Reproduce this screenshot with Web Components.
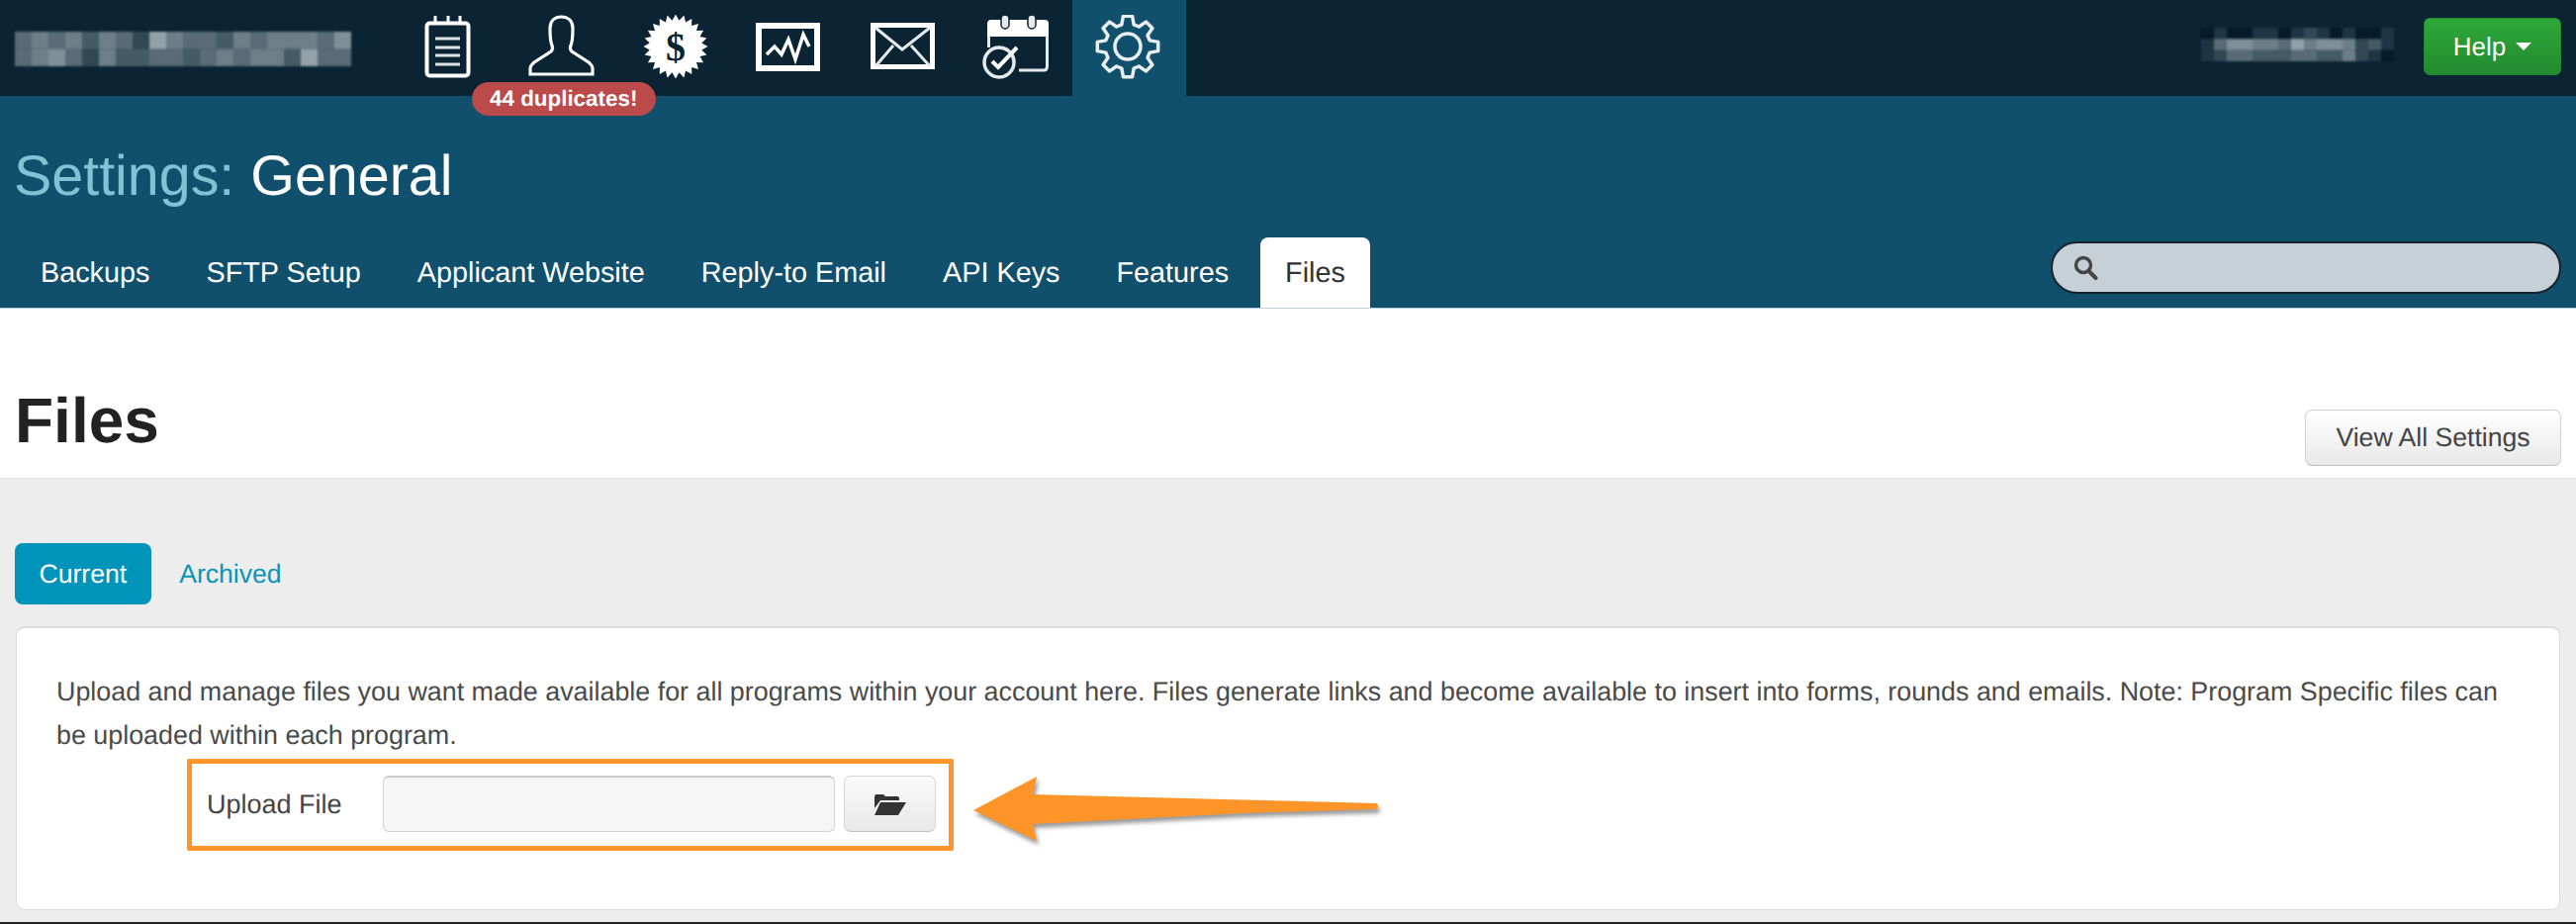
<!DOCTYPE html>
<html>
<head>
<meta charset="utf-8">
<title>Settings: General</title>
<style>
  html, body { margin: 0; padding: 0; }
  body {
    font-family: "Liberation Sans", Arial, sans-serif;
    background: #ededed;
    text-rendering: geometricPrecision;
  }
</style>
</head>
<body>
<app-topbar></app-topbar>
<settings-header></settings-header>
<page-title></page-title>
<files-panel></files-panel>

<script>
const WHITE = "#fff"
const DARK = "#0a2433"

function starPoints(cx, cy, outer, inner, count) {
  const pts = []
  for (let i = 0; i < count * 2; i++) {
    const r = i % 2 ? inner : outer
    const a = (Math.PI * i) / count - Math.PI / 2
    pts.push((cx + r * Math.cos(a)).toFixed(1) + "," + (cy + r * Math.sin(a)).toFixed(1))
  }
  return pts.join(" ")
}

function gearPoints(cx, cy, root, tip, teeth) {
  const pts = []
  for (let i = 0; i < teeth; i++) {
    const a = (2 * Math.PI * i) / teeth - Math.PI / 2
    const spots = [[root, -0.27], [tip, -0.15], [tip, 0.15], [root, 0.27]]
    spots.forEach(([r, d]) => {
      pts.push((cx + r * Math.cos(a + d)).toFixed(1) + "," + (cy + r * Math.sin(a + d)).toFixed(1))
    })
  }
  return pts.join(" ")
}

const icons = {
  notes: /* html */ `
    <rect x="18.5" y="8.5" width="42" height="53" rx="3" fill="none" stroke="${WHITE}" stroke-width="4"/>
    <path d="M27 1V9M40 1V9M52 1V9" stroke="${WHITE}" stroke-width="3"/>
    <path d="M27 24H52M27 33H52M27 41H52M27 50H52" stroke="#dfe5e8" stroke-width="3.2"/>`,
  person: /* html */ `
    <path d="M8 60V54C8 51 10 50 12 48L29 37C31 35 31 33 30 31C28 26 28 20 28 14C28 6 33 2 39.5 2C46 2 51 6 51 14C51 20 51 26 49 31C48 33 48 35 50 37L67 48C69 50 71 51 71 54V60Z"
      fill="none" stroke="${WHITE}" stroke-width="3.2"/>`,
  money: /* html */ `
    <polygon points="${starPoints(40, 32, 32.5, 26.5, 24)}" fill="${WHITE}"/>
    <text x="40" y="46" text-anchor="middle" font-family="Liberation Serif, serif" font-weight="700" font-size="40" fill="${DARK}">$</text>`,
  chart: /* html */ `
    <rect x="10" y="11" width="59" height="43" fill="none" stroke="${WHITE}" stroke-width="6"/>
    <polyline points="18,40 26,32 33,40 40,25 47,45 55,20 61,32" fill="none" stroke="${WHITE}" stroke-width="3.5"/>`,
  mail: /* html */ `
    <rect x="10.5" y="10.5" width="60" height="42" fill="none" stroke="${WHITE}" stroke-width="5"/>
    <path d="M13 13L40 35L68 13M13 52L31 31M68 52L49 31" fill="none" stroke="#e6eaec" stroke-width="3"/>`,
  calendar: /* html */ `
    <path d="M11 22V9Q11 5 15 5H69Q73 5 73 9V22Z" fill="${WHITE}"/>
    <path d="M12.5 22V33M71.5 22V52Q71.5 56 68 56H43" fill="none" stroke="#e6eaec" stroke-width="3"/>
    <rect x="25" y="0" width="8" height="14" rx="4" fill="#e6eaec" stroke="${DARK}" stroke-width="1.5"/>
    <rect x="52" y="0" width="8" height="14" rx="4" fill="#e6eaec" stroke="${DARK}" stroke-width="1.5"/>
    <circle cx="23" cy="48" r="15" fill="${DARK}" stroke="#e6eaec" stroke-width="3.5"/>
    <path d="M16 47L22 53L41 33" fill="none" stroke="${WHITE}" stroke-width="4"/>`,
  gear: /* html */ `
    <polygon points="${gearPoints(39, 32, 23, 31, 8)}" fill="none" stroke="#e9eef1" stroke-width="3.5" stroke-linejoin="round"/>
    <circle cx="39" cy="32" r="13" fill="none" stroke="#e9eef1" stroke-width="3.5"/>`
}

// pixelated patch, stands in for the blurred out names
class BlurPatch extends HTMLElement {
  connectedCallback() {
    const rows = this.getAttribute("rows").split("|").map((r) => r.trim().split(" "))
    const w = Number(this.getAttribute("cell-w"))
    const h = Number(this.getAttribute("cell-h"))
    let rects = ""
    rows.forEach((row, y) => {
      row.forEach((level, x) => {
        const fill = level === "0" ? "rgba(0,15,30,.45)" : `rgba(205,215,220,${level / 10})`
        rects += `<rect x="${x * w}" y="${y * h}" width="${w}" height="${h}" fill="${fill}"/>`
      })
    })
    const root = this.attachShadow({ mode: "open" })
    root.innerHTML = /* html */ `
      <style>
        :host { display: block; line-height: 0; }
        svg { filter: blur(1.2px); }
      </style>
      <svg width="${rows[0].length * w}" height="${rows.length * h}">${rects}</svg>`
  }
}

class NavIcon extends HTMLElement {
  connectedCallback() {
    const root = this.attachShadow({ mode: "open" })
    root.innerHTML = /* html */ `
      <style>
        :host {
          display: flex;
          justify-content: center;
          flex: 0 0 114.7px;
          height: 97px;
          padding-top: 15px;
          box-sizing: border-box;
          position: relative;
        }
        :host([active]) { background: #11506d; }
        svg { display: block; }
        .badge {
          position: absolute;
          left: -34px;
          top: 83px;
          width: 186px;
          height: 34px;
          line-height: 33px;
          border-radius: 17px;
          background: #bb4a4a;
          color: #fff;
          font-size: 22.4px;
          font-weight: 700;
          text-align: center;
          white-space: nowrap;
          z-index: 2;
        }
        .badge:empty { display: none; }
      </style>
      <svg width="80" height="66" viewBox="0 0 80 66">${icons[this.getAttribute("icon")]}</svg>
      <div class="badge">${this.getAttribute("badge") || ""}</div>`
  }
}

class AppTopbar extends HTMLElement {
  connectedCallback() {
    const root = this.attachShadow({ mode: "open" })
    root.innerHTML = /* html */ `
      <style>
        :host {
          display: flex;
          height: 97px;
          background: ${DARK};
          color: #fff;
          position: relative;
          z-index: 2;
        }
        .brand {
          flex: 0 0 381px;
          padding: 32px 0 0 15px;
        }
        .nav { display: flex; }
        .right {
          margin-left: auto;
          display: flex;
          align-items: flex-start;
          gap: 30px;
          padding-right: 15px;
        }
        .user { margin-top: 28px; }
        .help {
          margin-top: 18px;
          width: 139px;
          height: 58px;
          box-sizing: border-box;
          display: flex;
          align-items: center;
          justify-content: center;
          gap: 10px;
          border-radius: 6px;
          border: 1px solid #22872e;
          background: linear-gradient(#2fa83b, #228a2e);
          font-size: 26px;
          color: #fff;
        }
        .caret {
          width: 0;
          height: 0;
          border-left: 8px solid transparent;
          border-right: 8px solid transparent;
          border-top: 8px solid #fff;
        }
      </style>
      <div class="brand">
        <blur-patch cell-w="17" cell-h="17.5"
          rows="4 5 4 5 3 5 4 2 7 5 4 4 3 5 4 5 5 5 4 6|4 5 6 4 2 5 3 3 4 4 3 4 5 4 5 5 3 7 4 4"></blur-patch>
      </div>
      <div class="nav">
        <nav-icon icon="notes"></nav-icon>
        <nav-icon icon="person" badge="44 duplicates!" ></nav-icon>
        <nav-icon icon="money"></nav-icon>
        <nav-icon icon="chart"></nav-icon>
        <nav-icon icon="mail"></nav-icon>
        <nav-icon icon="calendar"></nav-icon>
        <nav-icon icon="gear" active></nav-icon>
      </div>
      <div class="right">
        <blur-patch class="user" cell-w="13" cell-h="11.3"
          rows="0 1 0 0 1 1 0 1 2 1 0 1 0 0 1|1 4 6 6 5 5 4 7 5 6 6 5 2 3 1|1 2 4 4 3 3 3 4 4 3 3 5 2 1 0"></blur-patch>
        <div class="help">Help<span class="caret"></span></div>
      </div>`
  }
}

class SettingsTab extends HTMLElement {
  connectedCallback() {
    const root = this.attachShadow({ mode: "open" })
    root.innerHTML = /* html */ `
      <style>
        :host {
          display: block;
          height: 71px;
          line-height: 73px;
          padding: 0 25px;
          font-size: 28.8px;
          color: #fff;
          white-space: nowrap;
        }
        :host([active]) {
          background: #fff;
          color: #333;
          border-radius: 8px 8px 0 0;
        }
      </style>
      <slot></slot>`
  }
}

class SettingsHeader extends HTMLElement {
  connectedCallback() {
    const root = this.attachShadow({ mode: "open" })
    root.innerHTML = /* html */ `
      <style>
        :host {
          display: block;
          height: 215px;
          box-sizing: border-box;
          background: #11506d;
          border-bottom: 1px solid #b8d0dc;
        }
        h2 {
          margin: 0;
          padding: 53px 0 0 14px;
          height: 143px;
          box-sizing: border-box;
          font-size: 57.4px;
          line-height: 56px;
          font-weight: 400;
          color: #fff;
        }
        h2 span { color: #82c2d2; }
        .row {
          display: flex;
          justify-content: space-between;
          padding: 0 15px 0 16px;
        }
        .tabs { display: flex; gap: 7px; }
        .search {
          margin-top: 4px;
          width: 516px;
          height: 53px;
          box-sizing: border-box;
          display: flex;
          align-items: center;
          padding-left: 21px;
          border: 2px solid #15232c;
          border-radius: 27px;
          background: #c8d0d7;
        }
      </style>
      <h2><span>Settings:</span> General</h2>
      <div class="row">
        <div class="tabs">
          <settings-tab>Backups</settings-tab>
          <settings-tab>SFTP Setup</settings-tab>
          <settings-tab>Applicant Website</settings-tab>
          <settings-tab>Reply-to Email</settings-tab>
          <settings-tab>API Keys</settings-tab>
          <settings-tab>Features</settings-tab>
          <settings-tab active>Files</settings-tab>
        </div>
        <div class="search">
          <svg width="25" height="25" viewBox="0 0 25 25">
            <circle cx="10" cy="10" r="7.5" fill="none" stroke="#444" stroke-width="3.4"/>
            <path d="M15.5 16L22.5 23" stroke="#444" stroke-width="4" stroke-linecap="round"/>
          </svg>
        </div>
      </div>`
  }
}

class PageTitle extends HTMLElement {
  connectedCallback() {
    const root = this.attachShadow({ mode: "open" })
    root.innerHTML = /* html */ `
      <style>
        :host {
          display: flex;
          justify-content: space-between;
          align-items: flex-end;
          height: 172px;
          box-sizing: border-box;
          padding: 0 15px 12px 15px;
          background: #fff;
          border-bottom: 1px solid #dedede;
        }
        h1 {
          margin: 0 0 14px;
          font-size: 64px;
          line-height: 64px;
          font-weight: 700;
          color: #222;
        }
        .btn {
          width: 259px;
          height: 57px;
          box-sizing: border-box;
          display: flex;
          align-items: center;
          justify-content: center;
          border: 1px solid #d2d2d2;
          border-bottom-color: #bdbdbd;
          border-radius: 7px;
          background: linear-gradient(#fff, #e8e8e8);
          font-size: 26.6px;
          color: #444;
        }
      </style>
      <h1>Files</h1>
      <div class="btn">View All Settings</div>`
  }
}

class UploadRow extends HTMLElement {
  connectedCallback() {
    const root = this.attachShadow({ mode: "open" })
    root.innerHTML = /* html */ `
      <style>
        :host {
          display: flex;
          align-items: center;
          position: relative;
          margin: 19px 0 0 152px;
          height: 57px;
          font-size: 27px;
          color: #444;
        }
        label { flex: 0 0 178px; }
        input {
          width: 457px;
          height: 57px;
          box-sizing: border-box;
          margin: 0;
          border: 1px solid #d2d2d2;
          border-top: 2px solid #cbcbcb;
          border-radius: 6px;
          background: #f6f6f6;
        }
        .browse {
          margin-left: 9px;
          width: 93px;
          height: 57px;
          box-sizing: border-box;
          display: flex;
          align-items: center;
          justify-content: center;
          border: 1px solid #d6d6d6;
          border-bottom-color: #c2c2c2;
          border-radius: 7px;
          background: linear-gradient(#fbfbfb, #e8e8e8);
        }
        /* annotation drawn over the screenshot */
        .mark {
          position: absolute;
          left: -20px;
          top: -17px;
          width: 775px;
          height: 93px;
          box-sizing: border-box;
          border: 5px solid #ff9529;
          border-radius: 2px;
          pointer-events: none;
        }
        .arrow {
          position: absolute;
          left: 767px;
          top: 0;
          filter: drop-shadow(2px 4px 2px rgba(0, 0, 0, 0.4));
        }
      </style>
      <label>Upload File</label>
      <input type="text" readonly>
      <div class="browse">
        <svg width="33" height="22" viewBox="0 0 33 22">
          <path d="M1 4Q1 1 3 1H10L12 3H24Q26 3 26 5V7H7L1 15Z" fill="#333"/>
          <path d="M7 9H33L25 22H1Z" fill="#333"/>
        </svg>
      </div>
      <div class="mark"></div>
      <svg class="arrow" width="420" height="84" viewBox="0 0 420 84">
        <path d="M8 35L72 1L68 19L416 28Q418 31 416 34L280 38L68 49L72 66Z" fill="#ff9529"/>
      </svg>`
  }
}

class FilesPanel extends HTMLElement {
  connectedCallback() {
    const root = this.attachShadow({ mode: "open" })
    root.innerHTML = /* html */ `
      <style>
        :host {
          display: block;
          height: 450px;
          box-sizing: border-box;
          padding: 65px 16px 12px 15px;
          background: #ededed;
          border-bottom: 2px solid #222;
        }
        .pills {
          display: flex;
          gap: 4px;
          font-size: 26.6px;
        }
        .pill {
          height: 62px;
          line-height: 62px;
          padding: 0 24.5px;
          border-radius: 8px;
          color: #0a94b9;
        }
        .pill.on {
          background: #0094bb;
          color: #fff;
        }
        .card {
          margin: 22px 0 0 1px;
          height: 287px;
          box-sizing: border-box;
          padding: 42px 40px 0 40px;
          background: #fff;
          border: 1px solid #dcdcdc;
          border-top: 2px solid #dcdcdc;
          border-radius: 9px;
          font-size: 26.87px;
          line-height: 44px;
          color: #4a4a4a;
        }
        p { margin: 0; }
      </style>
      <div class="pills">
        <div class="pill on">Current</div>
        <div class="pill">Archived</div>
      </div>
      <div class="card">
        <p>Upload and manage files you want made available for all programs within your account here. Files generate links and become available to insert into forms, rounds and emails. Note: Program Specific files can be uploaded within each program.</p>
        <upload-row></upload-row>
      </div>`
  }
}

customElements.define("blur-patch", BlurPatch)
customElements.define("nav-icon", NavIcon)
customElements.define("app-topbar", AppTopbar)
customElements.define("settings-tab", SettingsTab)
customElements.define("settings-header", SettingsHeader)
customElements.define("page-title", PageTitle)
customElements.define("upload-row", UploadRow)
customElements.define("files-panel", FilesPanel)
</script>
</body>
</html>
